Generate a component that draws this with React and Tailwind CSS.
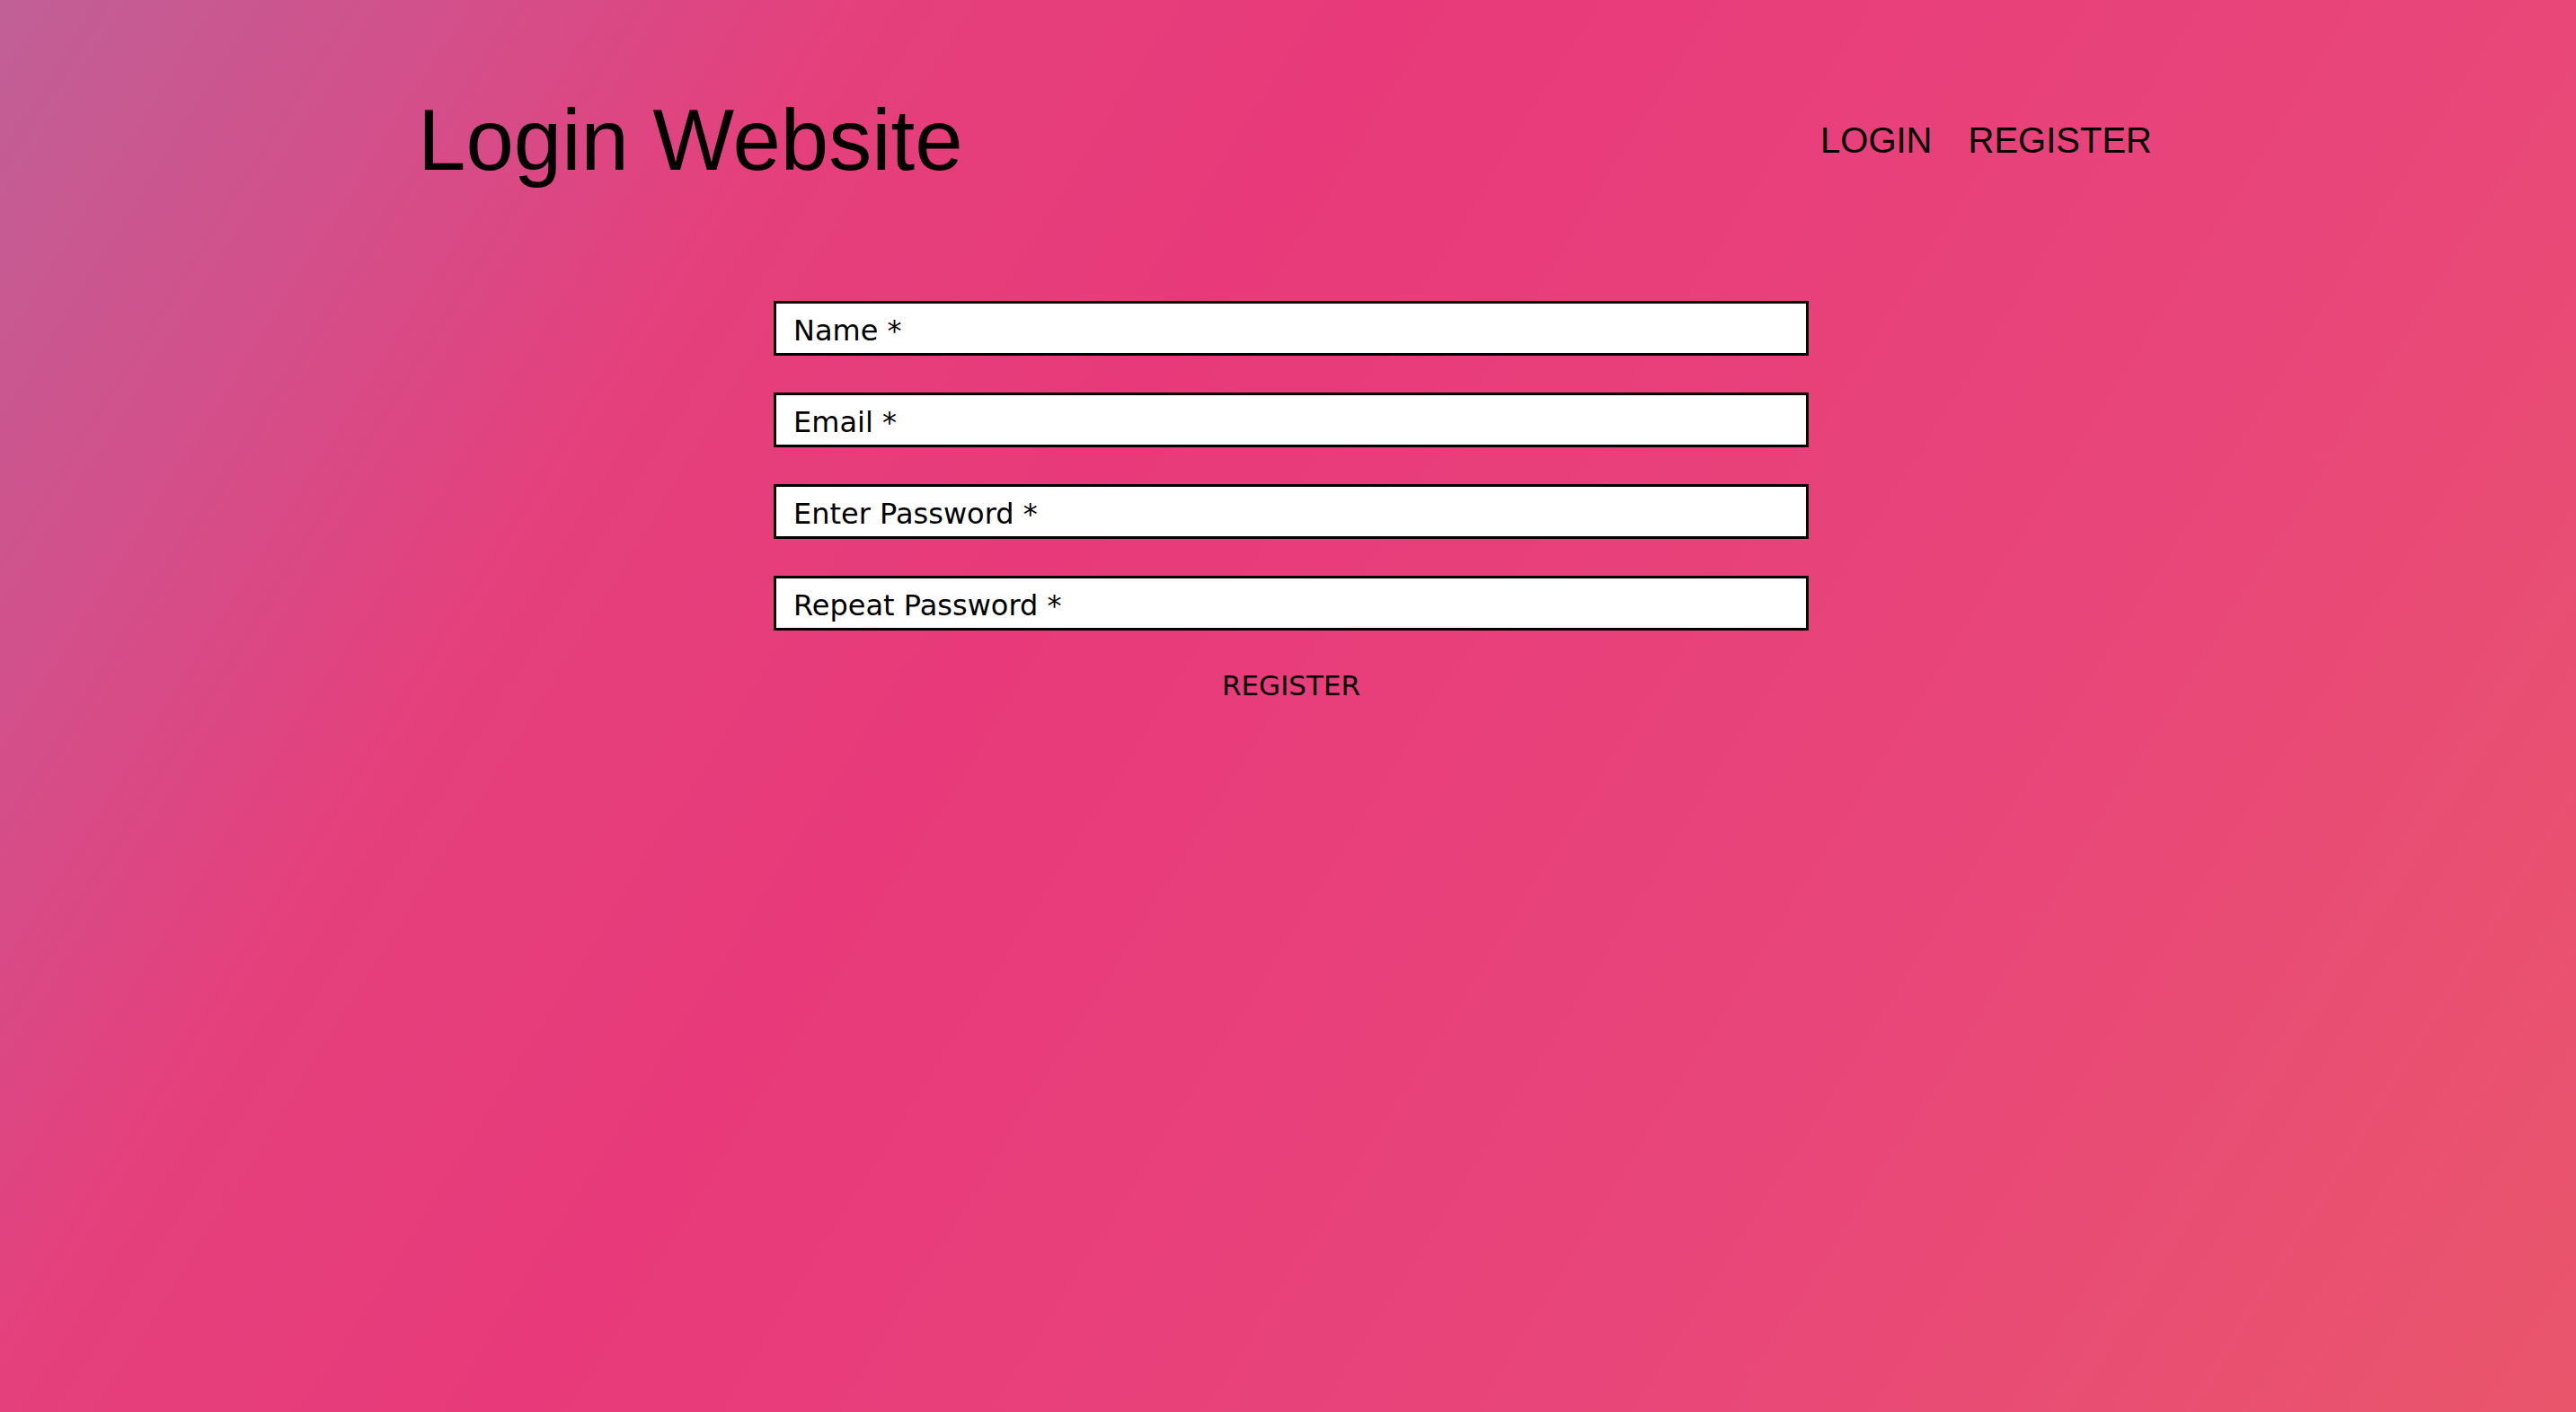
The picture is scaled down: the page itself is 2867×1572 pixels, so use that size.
import React, { useState } from "react";

const fields = [
  { name: "name", type: "text", label: "Name *" },
  { name: "email", type: "email", label: "Email *" },
  { name: "password", type: "password", label: "Enter Password *" },
  { name: "repeat", type: "password", label: "Repeat Password *" },
];

export default function App() {
  const [form, setForm] = useState({ name: "", email: "", password: "", repeat: "" });

  const handleChange = (e) => {
    setForm((prev) => ({ ...prev, [e.target.name]: e.target.value }));
  };

  return (
    <div className="min-h-screen w-full bg-[linear-gradient(122deg,#c06096_0%,#d2508b_13%,#e4407c_25%,#e83a7a_40%,#e8457a_70%,#e9566b_100%)]">
      {/* header */}
      <header className="flex items-center justify-between pl-[465px] pr-[472px] pt-[101px]">
        <h1 className="font-['Liberation_Sans',Arial,sans-serif] text-[96px] leading-[110px] font-normal text-black">
          Login Website
        </h1>
        <nav className="flex gap-[40px] font-['Liberation_Sans',Arial,sans-serif] text-[40px] leading-[46px] text-black">
          <a href="#" className="cursor-pointer">LOGIN</a>
          <a href="#" className="cursor-pointer">REGISTER</a>
        </nav>
      </header>

      {/* register form */}
      <form
        className="ml-[861px] mt-[124px] flex w-[1152px] flex-col gap-[41px]"
        onSubmit={(e) => e.preventDefault()}
      >
        {fields.map((f) => (
          <input
            key={f.name}
            name={f.name}
            type={f.type}
            value={form[f.name]}
            onChange={handleChange}
            placeholder={f.label}
            className="h-[61px] w-full border-[3px] border-black bg-white pl-[19px] pt-[4px] font-['DejaVu_Sans',Verdana,sans-serif] text-[32px] text-black outline-none placeholder:text-black"
          />
        ))}
        <button
          type="submit"
          className="mt-[2px] self-center bg-transparent font-['DejaVu_Sans',Verdana,sans-serif] text-[31px] leading-[36px] text-black"
        >
          REGISTER
        </button>
      </form>
    </div>
  );
}
